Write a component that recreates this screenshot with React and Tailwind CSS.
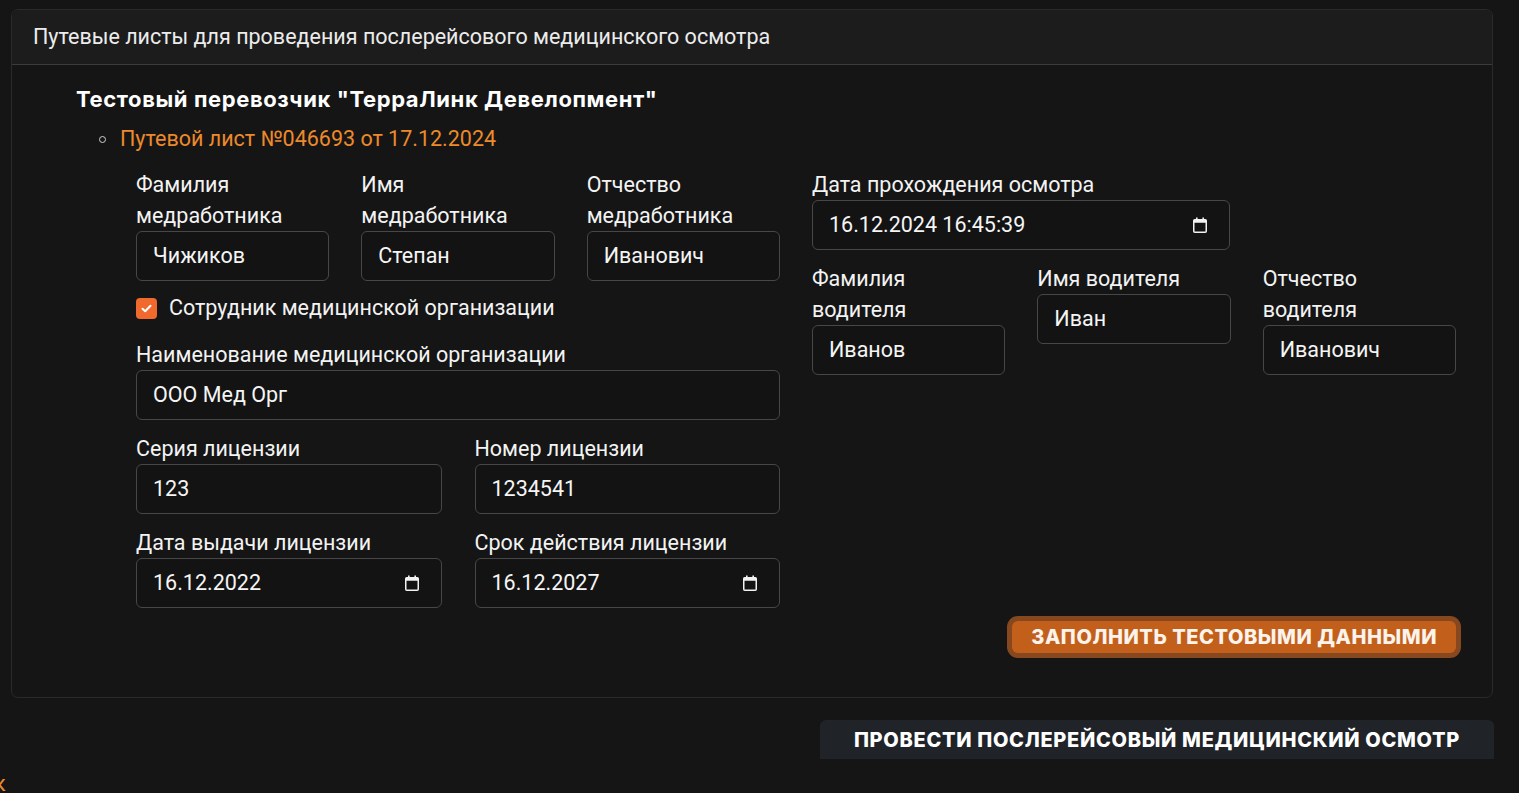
import React from "react";

const roboto = { fontFamily: "Roboto, 'Liberation Sans', sans-serif" };
const heavy = { fontFamily: "Inter, 'Noto Sans', 'Liberation Sans', sans-serif" };

function CalendarIcon() {
  return (
    <svg width="18" height="18" viewBox="0 0 18 18" className="shrink-0">
      <rect x="2.75" y="3.75" width="12.5" height="12.5" rx="1" fill="none" stroke="#f2f2f2" strokeWidth="1.5" />
      <rect x="2.75" y="3.75" width="12.5" height="3" fill="#f2f2f2" />
      <rect x="5" y="1.5" width="1.6" height="3" fill="#f2f2f2" />
      <rect x="11.4" y="1.5" width="1.6" height="3" fill="#f2f2f2" />
    </svg>
  );
}

function Field({ label, value, date, className = "" }) {
  return (
    <div className={"flex flex-col " + className}>
      <label className="text-[21.5px] leading-[31px] text-[#f3f3f3]">{label}</label>
      <div className="flex h-[50px] items-center justify-between rounded-[6px] border border-[#474747] bg-[#131313] pl-[16px] pr-[20px] text-[21.5px] text-[#f5f5f5]">
        <span>{value}</span>
        {date && <CalendarIcon />}
      </div>
    </div>
  );
}

export default function App() {
  return (
    <div className="min-h-[793px] overflow-hidden bg-[#151515] pl-[11px] pt-[9px]" style={roboto}>
      <div className="w-[1482px] rounded-[7px] border border-[#2a2a2a] bg-[#151515]">
        <div className="flex h-[55px] items-center rounded-t-[7px] border-b border-[#3b3b3b] bg-[#1c1c1c] px-[21px] text-[21.5px] text-[#ececec]">
          Путевые листы для проведения послерейсового медицинского осмотра
        </div>

        <div className="pb-[44px] pl-[64px] pt-[20px]">
          <div className="text-[22px] font-bold leading-[28px] tracking-[0.6px] text-white" style={heavy}>
            Тестовый перевозчик "ТерраЛинк Девелопмент"
          </div>

          <ul className="mt-[12px] pl-[23px]">
            <li className="flex items-center gap-[14px] leading-[28px]">
              <span className="h-[7px] w-[7px] rounded-full border border-[#d0d0d0]" />
              <span className="text-[21.5px] text-[#ec8a2c]">Путевой лист №046693 от 17.12.2024</span>
            </li>
          </ul>

          <div className="ml-[60px] mt-[16px] w-[1320px]">
            <div className="grid grid-cols-2 gap-x-[32px]">
              {/* medical worker */}
              <div className="flex flex-col">
                <div className="grid grid-cols-3 gap-x-[32px]">
                  <Field label={<>Фамилия<br />медработника</>} value="Чижиков" />
                  <Field label={<>Имя<br />медработника</>} value="Степан" />
                  <Field label={<>Отчество<br />медработника</>} value="Иванович" />
                </div>

                <div className="mt-[12px] flex h-[31px] items-center gap-[12px]">
                  <span className="flex h-[21px] w-[21px] items-center justify-center rounded-[4px] bg-[#ef6a2c]">
                    <svg width="13" height="13" viewBox="0 0 13 13">
                      <path d="M2.5 6.8 L5.2 9.3 L10.5 3.8" fill="none" stroke="white" strokeWidth="2" strokeLinecap="round" strokeLinejoin="round" />
                    </svg>
                  </span>
                  <span className="text-[21.5px] text-[#f3f3f3]">Сотрудник медицинской организации</span>
                </div>

                <Field className="mt-[15px]" label="Наименование медицинской организации" value="ООО Мед Орг" />

                <div className="mt-[13px] grid grid-cols-2 gap-x-[33px] gap-y-[13px]">
                  <Field label="Серия лицензии" value="123" />
                  <Field label="Номер лицензии" value="1234541" />
                  <Field label="Дата выдачи лицензии" value="16.12.2022" date />
                  <Field label="Срок действия лицензии" value="16.12.2027" date />
                </div>
              </div>

              {/* driver */}
              <div className="flex flex-col">
                <Field className="w-[418px]" label="Дата прохождения осмотра" value="16.12.2024 16:45:39" date />
                <div className="mt-[13px] grid grid-cols-3 items-start gap-x-[32px]">
                  <Field label={<>Фамилия<br />водителя</>} value="Иванов" />
                  <Field label="Имя водителя" value="Иван" />
                  <Field label={<>Отчество<br />водителя</>} value="Иванович" />
                </div>
              </div>
            </div>

            <div className="mt-[13px] flex justify-end">
              <button className="h-[32px] rounded-[6px] bg-[#c2601b] px-[19px] text-[20px] font-extrabold leading-[32px] tracking-[0.55px] text-[#fbf3ec] shadow-[0_0_0_5px_#87481f]" style={heavy}>
                ЗАПОЛНИТЬ ТЕСТОВЫМИ ДАННЫМИ
              </button>
            </div>
          </div>
        </div>
      </div>

      <div className="mt-[22px] flex w-[1483px] justify-end">
        <button className="h-[39px] w-[674px] rounded-t-[6px] bg-[#202327] text-[20px] font-extrabold tracking-[0.7px] text-white" style={heavy}>
          ПРОВЕСТИ ПОСЛЕРЕЙСОВЫЙ МЕДИЦИНСКИЙ ОСМОТР
        </button>
      </div>

      <div className="-ml-[17px] mt-[15px] text-[21.5px] leading-[20px] text-[#ec8a2c]">к</div>
    </div>
  );
}
